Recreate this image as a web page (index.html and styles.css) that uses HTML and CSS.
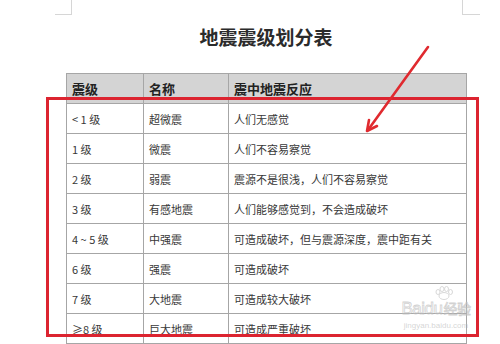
FILE: index.html
```html
<!DOCTYPE html>
<html lang="zh-CN">
<head>
<meta charset="utf-8">
<title>地震震级划分表</title>
<link rel="stylesheet" href="styles.css">
</head>
<body>
<div class="page">
  <div class="sheet">
    <h1 class="title">地震震级划分表</h1>
    <table class="grid">
      <colgroup>
        <col class="c1"><col class="c2"><col class="c3">
      </colgroup>
      <thead>
        <tr><th>震级</th><th>名称</th><th>震中地震反应</th></tr>
      </thead>
      <tbody>
        <tr><td>&lt; 1 级</td><td>超微震</td><td>人们无感觉</td></tr>
        <tr><td>1 级</td><td>微震</td><td>人们不容易察觉</td></tr>
        <tr><td>2 级</td><td>弱震</td><td>震源不是很浅，人们不容易察觉</td></tr>
        <tr><td>3 级</td><td>有感地震</td><td>人们能够感觉到，不会造成破坏</td></tr>
        <tr><td>4 ~ 5 级</td><td>中强震</td><td>可造成破坏，但与震源深度，震中距有关</td></tr>
        <tr><td>6 级</td><td>强震</td><td>可造成破坏</td></tr>
        <tr><td>7 级</td><td>大地震</td><td>可造成较大破坏</td></tr>
        <tr><td>≥8 级</td><td>巨大地震</td><td>可造成严重破坏</td></tr>
      </tbody>
    </table>
  </div>

  <div class="mark mark-left"></div>
  <div class="mark mark-right"></div>

  <div class="watermark">
    <svg class="wm-paw" width="20" height="14" viewBox="0 0 20 14">
      <ellipse cx="10" cy="10" rx="5" ry="3.5" fill="none" stroke="#d8d8d8" stroke-width="1"/>
      <ellipse cx="4" cy="6" rx="2" ry="2.5" fill="none" stroke="#d8d8d8" stroke-width="1"/>
      <ellipse cx="8" cy="3" rx="2" ry="2.5" fill="none" stroke="#d8d8d8" stroke-width="1"/>
      <ellipse cx="12.5" cy="3" rx="2" ry="2.5" fill="none" stroke="#d8d8d8" stroke-width="1"/>
      <ellipse cx="16.5" cy="6" rx="2" ry="2.5" fill="none" stroke="#d8d8d8" stroke-width="1"/>
    </svg>
    <div class="wm-logo">Baidu<span class="wm-cn">经验</span></div>
    <div class="wm-url">jingyan.baidu.com</div>
  </div>

  <svg class="annot" width="500" height="344" viewBox="0 0 500 344">
    <rect x="47.5" y="98.5" width="430" height="237" fill="none" stroke="#dc2430" stroke-width="3"/>
    <line x1="428" y1="47" x2="368" y2="130" stroke="#e02a2f" stroke-width="2.6" stroke-linecap="round"/>
    <polyline points="369,120 367,131 377,126" fill="none" stroke="#e02a2f" stroke-width="2.6" stroke-linecap="round" stroke-linejoin="round"/>
  </svg>
</div>
</body>
</html>
```
FILE: styles.css
```css
html, body {
  margin: 0;
  padding: 0;
  background: #ffffff;
}

.page {
  position: relative;
  width: 500px;
  height: 344px;
  overflow: hidden;
  background: #ffffff;
  font-family: "Noto Sans CJK SC", "Noto Sans", sans-serif;
}

.sheet {
  width: 400px;
  margin-left: 66px;
}

.title {
  margin: 0;
  height: 73px;
  line-height: 73px;
  text-align: center;
  font-size: 19px;
  font-weight: 700;
  color: #2b2b2b;
}

.grid {
  width: 400px;
  border-collapse: collapse;
  table-layout: fixed;
  color: #383838;
}

.c1 { width: 77px; }
.c2 { width: 85px; }
.c3 { width: 238px; }

.grid th,
.grid td {
  border: 1px solid #a6a6a6;
  padding: 0 0 0 5px;
  text-align: left;
  white-space: nowrap;
  overflow: hidden;
}

.grid th {
  height: 29px;
  background: #d4d4d4;
  font-size: 13px;
  font-weight: 700;
  color: #222222;
}

.grid td {
  height: 29px;
  font-size: 11px;
  font-weight: 400;
}

.mark {
  position: absolute;
  top: 0;
  width: 16px;
  height: 14px;
  border-bottom: 1px solid #d6d6d6;
}

.mark-left {
  left: 55px;
  border-right: 1px solid #d6d6d6;
}

.mark-right {
  left: 462px;
  width: 17px;
  border-left: 1px solid #d6d6d6;
}

.watermark {
  position: absolute;
  left: 398px;
  top: 286px;
  width: 76px;
  display: flex;
  flex-direction: column;
  align-items: center;
  color: rgba(190, 190, 190, 0.5);
  font-family: "Liberation Sans", "Noto Sans CJK SC", sans-serif;
}

.wm-paw {
  display: block;
  margin-left: 16px;
}

.wm-logo {
  font-size: 17px;
  line-height: 16px;
  white-space: nowrap;
  letter-spacing: -0.5px;
  color: transparent;
  -webkit-text-stroke: 0.8px rgba(190, 190, 190, 0.7);
}

.wm-cn {
  font-family: "Noto Sans CJK SC", sans-serif;
  font-size: 14px;
  margin-left: 1px;
}

.wm-url {
  margin-top: 4px;
  font-size: 8px;
  line-height: 10px;
  color: rgba(185, 185, 185, 0.6);
}

.annot {
  position: absolute;
  left: 0;
  top: 0;
  pointer-events: none;
}
```
